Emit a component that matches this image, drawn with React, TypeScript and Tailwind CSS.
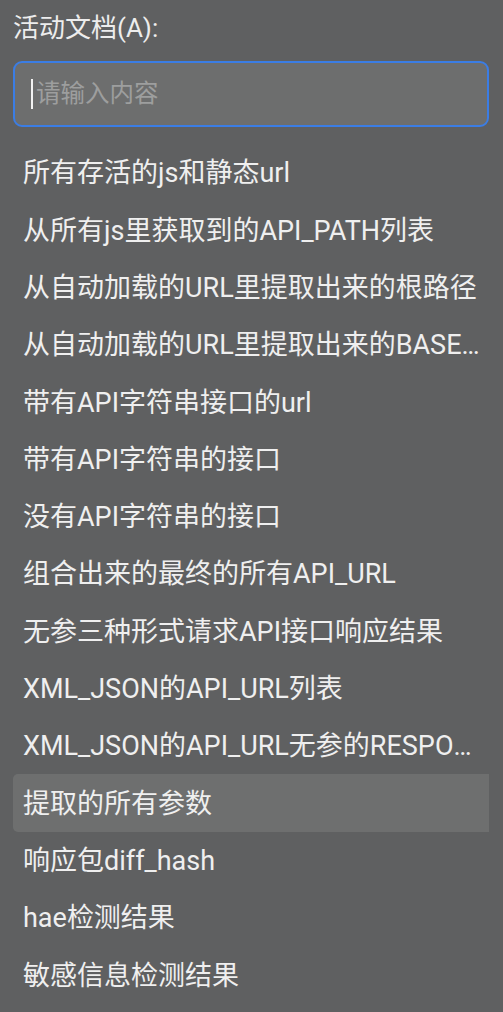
const items = [
  "所有存活的js和静态url",
  "从所有js里获取到的API_PATH列表",
  "从自动加载的URL里提取出来的根路径",
  "从自动加载的URL里提取出来的BASEURL",
  "带有API字符串接口的url",
  "带有API字符串的接口",
  "没有API字符串的接口",
  "组合出来的最终的所有API_URL",
  "无参三种形式请求API接口响应结果",
  "XML_JSON的API_URL列表",
  "XML_JSON的API_URL无参的RESPONSE",
  "提取的所有参数",
  "响应包diff_hash",
  "hae检测结果",
  "敏感信息检测结果",
];

const font = 'Roboto, "Noto Sans CJK SC", sans-serif';

export default function App() {
  const active = 11;
  return (
    <div
      className="min-h-screen w-full overflow-hidden bg-[#5f6061] px-[13px] pt-[12px] text-[#efefef]"
      style={{ fontFamily: font }}
    >
      <div className="text-[26px] leading-[32px] text-[#ededed]">活动文档(A):</div>

      {/* search box */}
      <div className="mt-[17px] flex h-[66px] w-[476px] items-center gap-[3px] rounded-[9px] border-2 border-[#3b7de4] bg-[#6d6e6e] pl-[16px]">
        <span className="h-[30px] w-[2px] shrink-0 bg-[#f2f2f2]" />
        <input
          placeholder="请输入内容"
          className="w-full bg-transparent text-[24.5px] text-[#eeeeee] outline-none placeholder:text-[#9d9e9e]"
          style={{ fontFamily: font }}
        />
      </div>

      <ul className="mt-[17px] w-[476px]">
        {items.map((t, i) => (
          <li
            key={t}
            className={`flex h-[57.3px] items-center pl-[10px] pr-[2px] pt-[2px] text-[27px] ${
              i === active ? "rounded-l-[5px] bg-[#6e6f6f]" : ""
            }`}
          >
            <span className="truncate">{t}</span>
          </li>
        ))}
      </ul>
    </div>
  );
}
